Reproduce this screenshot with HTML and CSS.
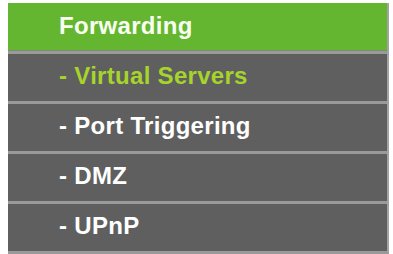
FILE: index.html
```html
<!DOCTYPE html>
<html>
<head>
<meta charset="utf-8">
<link rel="stylesheet" href="styles.css">
</head>
<body>
<div class="menu">
  <div class="head">Forwarding</div>
  <div class="item active">- Virtual Servers</div>
  <div class="item">- Port Triggering</div>
  <div class="item">- DMZ</div>
  <div class="item">- UPnP</div>
</div>
</body>
</html>
```
FILE: styles.css
```css
html, body {
  margin: 0;
  padding: 0;
  background: #ffffff;
}
body {
  padding: 3px 0 0 8px;
}
.menu {
  width: 379px;
  border-right: 2px solid #a3a3a3;
  border-bottom: 3px solid #9a9a9a;
  font-family: "Liberation Sans", Arial, sans-serif;
  font-weight: bold;
  font-size: 24px;
  letter-spacing: 0.3px;
}
.head {
  height: 48px;
  background: #64b631;
  color: #f8fff0;
  display: flex;
  align-items: center;
  padding-left: 51px;
  padding-bottom: 2px;
  box-sizing: border-box;
  border-bottom: 1px solid #7c8a74;
}
.item {
  height: 50px;
  box-sizing: border-box;
  border-top: 3px solid #9a9a9a;
  background: #5f5f5f;
  color: #ffffff;
  display: flex;
  align-items: center;
  padding-left: 51px;
  padding-bottom: 3px;
}
.item.active {
  color: #a6d42c;
}
```
